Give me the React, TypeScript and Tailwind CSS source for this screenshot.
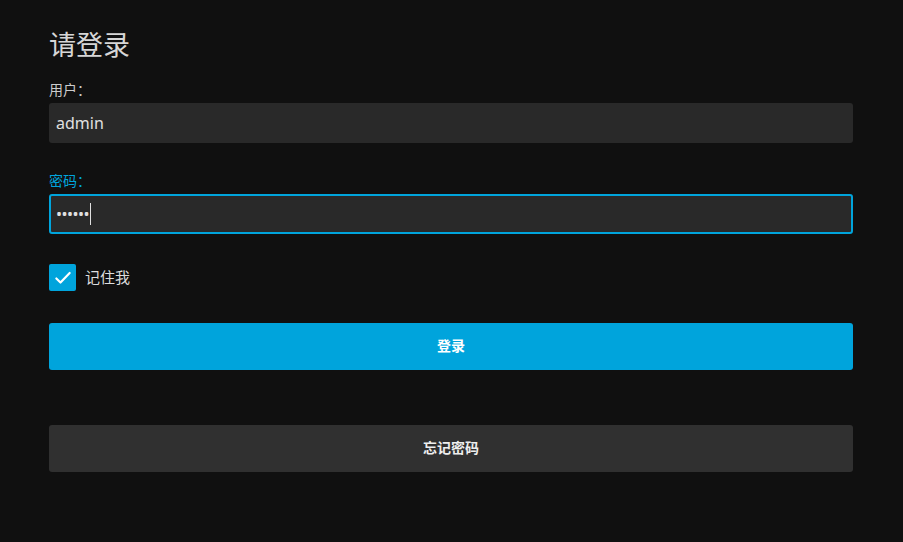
import React from 'react';

const font = { fontFamily: '"Noto Sans", "Noto Sans CJK SC", sans-serif' };

const Login = () => {
  return (
    <div className="min-h-screen bg-[#101010] px-[49px] pt-[28px] text-[#dddddd]" style={font}>
      <form className="w-[804px]" onSubmit={(e) => e.preventDefault()}>
        {/* Title */}
        <h1 className="text-[27px] leading-[34px] font-normal text-[#d6d6d6]">请登录</h1>

        {/* Username */}
        <label className="mt-[18px] mb-[3px] block text-[14px] leading-[20px] text-[#cccccc]">用户：</label>
        <div className="flex h-[40px] items-center rounded-[3px] bg-[#292929] px-[7px] text-[16px] text-[#e0e0e0]">
          admin
        </div>

        {/* Password */}
        <label className="mt-[28px] mb-[3px] block text-[14px] leading-[20px] text-[#00a4dc]">密码：</label>
        <div className="flex h-[40px] items-center rounded-[3px] border-2 border-[#00a4dc] bg-[#292929] px-[5px] text-[16px] text-[#e0e0e0]">
          <span className="text-[16px] tracking-[-0.5px]">••••••</span>
          <span className="ml-[1px] h-[22px] w-px bg-[#e0e0e0]"></span>
        </div>

        {/* Remember me */}
        <div className="mt-[30px] flex items-center gap-[9px]">
          <div className="flex h-[27px] w-[27px] items-center justify-center rounded-[2px] bg-[#00a4dc]">
            <svg width="20" height="20" viewBox="0 0 24 24" fill="none" stroke="white" strokeWidth="2.6" strokeLinecap="round" strokeLinejoin="round">
              <path d="M4 12.5l5 5L20 6" />
            </svg>
          </div>
          <span className="text-[15px] text-[#dddddd]">记住我</span>
        </div>

        {/* Buttons */}
        <button className="mt-[32px] flex h-[47px] w-full items-center justify-center rounded-[3px] bg-[#00a4dc] pb-[3px] text-[14px] font-bold text-white">
          登录
        </button>
        <button className="mt-[55px] flex h-[47px] w-full items-center justify-center rounded-[3px] bg-[#303030] pb-[3px] text-[14px] font-bold text-[#eeeeee]">
          忘记密码
        </button>
      </form>
    </div>
  );
};

export default function App() {
  return <Login />;
}
